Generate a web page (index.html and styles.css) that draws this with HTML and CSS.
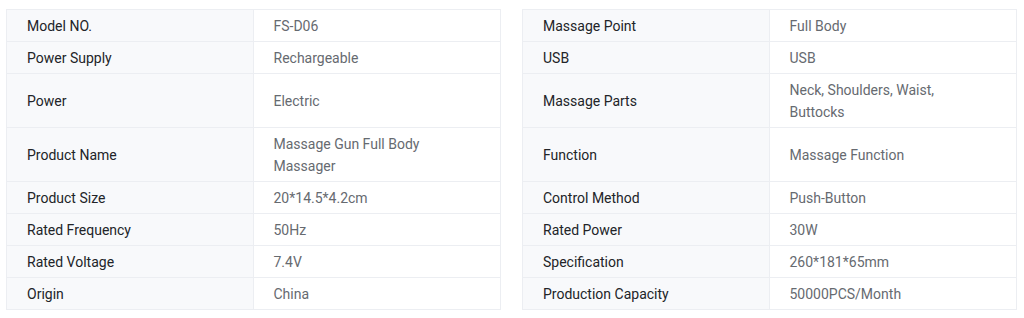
FILE: index.html
```html
<!DOCTYPE html>
<html>
<head>
<meta charset="utf-8">
<link rel="stylesheet" href="styles.css">
</head>
<body>
<div class="specs">
  <div class="row">
    <div class="half"><div class="label">Model NO.</div><div class="value">FS-D06</div></div>
    <div class="half"><div class="label">Massage Point</div><div class="value">Full Body</div></div>
  </div>
  <div class="row">
    <div class="half"><div class="label">Power Supply</div><div class="value">Rechargeable</div></div>
    <div class="half"><div class="label">USB</div><div class="value">USB</div></div>
  </div>
  <div class="row">
    <div class="half"><div class="label">Power</div><div class="value">Electric</div></div>
    <div class="half"><div class="label">Massage Parts</div><div class="value">Neck, Shoulders, Waist, Buttocks</div></div>
  </div>
  <div class="row">
    <div class="half"><div class="label">Product Name</div><div class="value">Massage Gun Full Body Massager</div></div>
    <div class="half"><div class="label">Function</div><div class="value">Massage Function</div></div>
  </div>
  <div class="row">
    <div class="half"><div class="label">Product Size</div><div class="value">20*14.5*4.2cm</div></div>
    <div class="half"><div class="label">Control Method</div><div class="value">Push-Button</div></div>
  </div>
  <div class="row">
    <div class="half"><div class="label">Rated Frequency</div><div class="value">50Hz</div></div>
    <div class="half"><div class="label">Rated Power</div><div class="value">30W</div></div>
  </div>
  <div class="row">
    <div class="half"><div class="label">Rated Voltage</div><div class="value">7.4V</div></div>
    <div class="half"><div class="label">Specification</div><div class="value">260*181*65mm</div></div>
  </div>
  <div class="row">
    <div class="half"><div class="label">Origin</div><div class="value">China</div></div>
    <div class="half"><div class="label">Production Capacity</div><div class="value">50000PCS/Month</div></div>
  </div>
</div>
</body>
</html>
```
FILE: styles.css
```css
html, body {
  margin: 0;
  padding: 0;
  background: #ffffff;
}
body {
  font-family: Roboto, "Liberation Sans", Arial, sans-serif;
  font-size: 14px;
  line-height: 22px;
}
.specs {
  padding: 9px 7px 0 6px;
  display: flex;
  flex-direction: column;
}
.row {
  display: grid;
  grid-template-columns: 1fr 1fr;
  column-gap: 21px;
}
.half {
  display: grid;
  grid-template-columns: 1fr 1fr;
  border-left: 1px solid #eceef2;
  border-right: 1px solid #eceef2;
  border-bottom: 1px solid #eceef2;
}
.row:first-child .half {
  border-top: 1px solid #eceef2;
}
.label {
  background: #f8f9fb;
  color: #222428;
  padding: 4.5px 28px 4.5px 20px;
  border-right: 1px solid #eceef2;
  display: flex;
  align-items: center;
}
.value {
  color: #666a70;
  padding: 4.5px 28px 4.5px 20px;
  display: flex;
  align-items: center;
}
```
